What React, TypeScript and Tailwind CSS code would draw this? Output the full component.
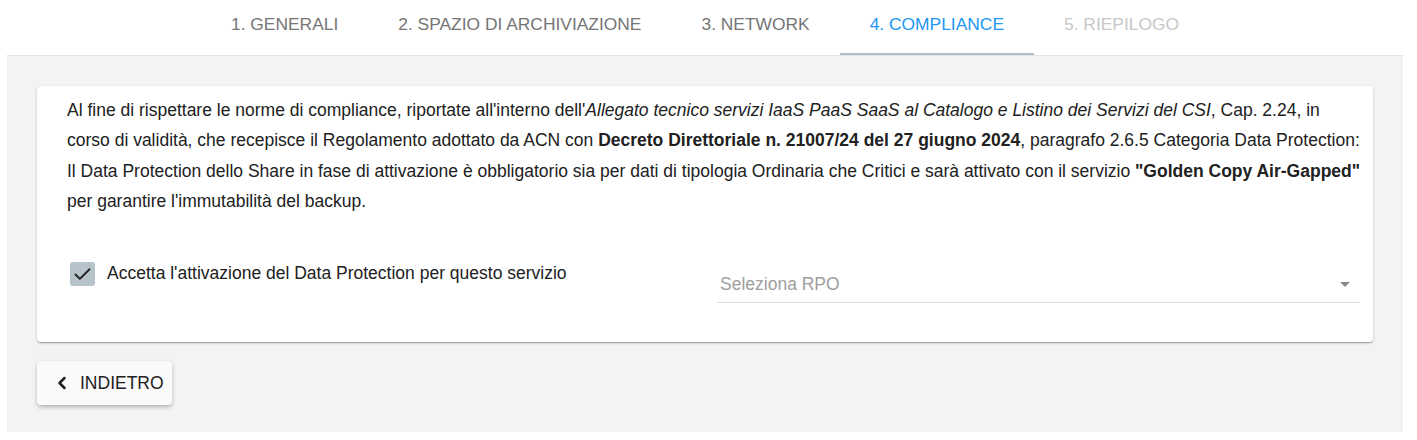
import { Check, ChevronLeft } from "lucide-react";

const tabs = [
  { label: "1. GENERALI", state: "done" },
  { label: "2. SPAZIO DI ARCHIVIAZIONE", state: "done" },
  { label: "3. NETWORK", state: "done" },
  { label: "4. COMPLIANCE", state: "active" },
  { label: "5. RIEPILOGO", state: "disabled" },
];

export default function App() {
  return (
    <div
      className="min-h-screen w-[1417px] bg-white text-[17.5px] text-[#212121]"
      style={{ fontFamily: '"Liberation Sans", Arial, sans-serif' }}
    >
      <div className="ml-[7px] w-[1396px]">
        {/* Stepper tabs */}
        <div className="flex h-[55px] justify-center text-[17.4px]">
          {tabs.map((tab) => (
            <div
              key={tab.label}
              className={
                tab.state === "active"
                  ? "flex items-center border-b-2 border-[#b0bec5] px-[30px] pb-[4px] text-[#2196f3]"
                  : tab.state === "disabled"
                  ? "flex items-center border-b-2 border-transparent px-[30px] pb-[4px] text-[#c7c7c7]"
                  : "flex items-center border-b-2 border-transparent px-[30px] pb-[4px] text-[#757575]"
              }
            >
              {tab.label}
            </div>
          ))}
        </div>

        {/* Step content */}
        <div className="h-[377px] border-t border-[#e3e3e3] bg-[#f3f3f3] px-[30px] pt-[30px]">
          <div className="rounded-[4px] bg-white pb-[39px] pl-[30px] pr-[13px] pt-[9px] shadow-[0_1px_3px_rgba(0,0,0,0.2),0_1px_1px_rgba(0,0,0,0.14),0_2px_1px_-1px_rgba(0,0,0,0.12)]">
            <p className="whitespace-nowrap text-[17.5px] leading-[30.3px]">
              Al fine di rispettare le norme di compliance, riportate all'interno dell'
              <i>Allegato tecnico servizi IaaS PaaS SaaS al Catalogo e Listino dei Servizi del CSI</i>, Cap. 2.24, in
              <br />
              corso di validità, che recepisce il Regolamento adottato da ACN con{" "}
              <b>Decreto Direttoriale n. 21007/24 del 27 giugno 2024</b>, paragrafo 2.6.5 Categoria Data Protection:
              <br />
              Il Data Protection dello Share in fase di attivazione è obbligatorio sia per dati di tipologia Ordinaria
              che Critici e sarà attivato con il servizio <b>"Golden Copy Air-Gapped"</b>
              <br />
              per garantire l'immutabilità del backup.
            </p>

            <div className="mt-[30px] flex">
              <label className="flex w-[650px] items-start gap-[12px] pl-[3px] pt-[16px]">
                <span className="flex h-[24px] w-[25px] shrink-0 items-center justify-center rounded-[3px] bg-[#b7c3cb]">
                  <Check size={21} strokeWidth={2.2} className="text-[#222]" />
                </span>
                <span className="leading-[22px]">Accetta l'attivazione del Data Protection per questo servizio</span>
              </label>

              <div className="flex-1 pt-[27px]">
                <div className="flex h-[30px] items-center justify-between border-b border-[#dcdcdc] pb-[7px] pl-[3px] pr-[10px]">
                  <span className="text-[#9e9e9e]">Seleziona RPO</span>
                  <span className="h-0 w-0 border-x-[5px] border-t-[5px] border-x-transparent border-t-[#8a8a8a]" />
                </div>
              </div>
            </div>
          </div>

          <button className="mt-[19px] flex h-[44px] items-center gap-[8px] rounded-[4px] bg-[#fafafa] pl-[15px] pr-[8px] text-[#212121] shadow-[0_3px_5px_-1px_rgba(0,0,0,0.2),0_1px_4px_rgba(0,0,0,0.12)]">
            <ChevronLeft size={20} strokeWidth={3} />
            <span>INDIETRO</span>
          </button>
        </div>
      </div>
    </div>
  );
}
